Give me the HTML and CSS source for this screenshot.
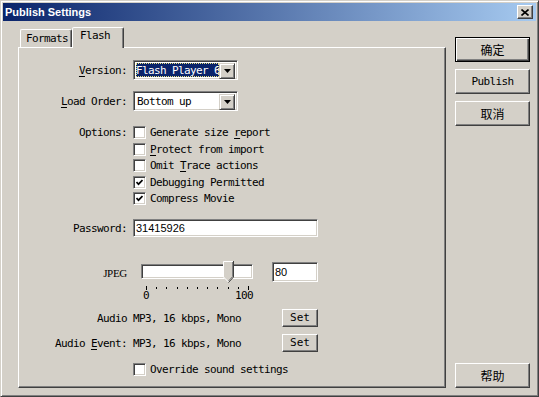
FILE: index.html
```html
<!DOCTYPE html>
<html lang="en">
<head>
<meta charset="UTF-8">
<meta name="viewport" content="width=device-width, initial-scale=1.0">
<title>Publish Settings</title>
<link rel="stylesheet" href="styles.css">
</head>
<body>

<div class="window">
  <div class="titlebar">
    <span class="title">Publish Settings</span>
    <button class="close">
      <svg width="8" height="7" viewBox="0 0 8 7"><path d="M0.5 0.5 L7.5 6.5 M7.5 0.5 L0.5 6.5" stroke="#000" stroke-width="1.6"/></svg>
    </button>
  </div>

  <div class="main">
    <div class="tabarea">
      <div class="tabs">
        <div class="tab">Formats</div>
        <div class="tab active">Flash</div>
      </div>

      <div class="panel">
        <div class="row r-version">
          <span class="lbl"><u>V</u>ersion:</span>
          <div class="select">
            <span class="sel-text focused">Flash Player 6</span>
            <span class="drop"><svg width="7" height="4" viewBox="0 0 7 4"><path d="M0 0 H7 L3.5 4 Z" fill="#000"/></svg></span>
          </div>
        </div>

        <div class="row r-load">
          <span class="lbl"><u>L</u>oad Order:</span>
          <div class="select">
            <span class="sel-text">Bottom up</span>
            <span class="drop"><svg width="7" height="4" viewBox="0 0 7 4"><path d="M0 0 H7 L3.5 4 Z" fill="#000"/></svg></span>
          </div>
        </div>

        <div class="row r-options">
          <span class="lbl opt-lbl">Options:</span>
          <div class="checks">
            <div class="check"><span class="box"></span><span>Generate size <u>r</u>eport</span></div>
            <div class="check"><span class="box"></span><span><u>P</u>rotect from import</span></div>
            <div class="check"><span class="box"></span><span>Omit <u>T</u>race actions</span></div>
            <div class="check"><span class="box"><svg width="7" height="7" viewBox="0 0 7 7"><path d="M0.5 3 L2.5 5.2 L6.5 1" fill="none" stroke="#000" stroke-width="1.7"/></svg></span><span>Debugging Permitted</span></div>
            <div class="check"><span class="box"><svg width="7" height="7" viewBox="0 0 7 7"><path d="M0.5 3 L2.5 5.2 L6.5 1" fill="none" stroke="#000" stroke-width="1.7"/></svg></span><span>Compress Movie</span></div>
          </div>
        </div>

        <div class="row r-password">
          <span class="lbl">Password:</span>
          <div class="field">31415926</div>
        </div>

        <div class="row r-jpeg">
          <span class="lbl jpeg-lbl">JPEG</span>
          <div class="jpeg-ctl">
            <div class="slider">
              <div class="track"></div>
              <svg class="thumb" width="11" height="22" viewBox="0 0 11 22">
                <path d="M0 0 H11 V16 L5.5 21.5 L0 16 Z" fill="#d4d0c8"/>
                <path d="M0.5 16 V0.5 H10" fill="none" stroke="#fff"/>
                <path d="M10.5 0 V16 L5.5 21.5" fill="none" stroke="#404040"/>
                <path d="M9.5 1 V15.5 L5.5 20" fill="none" stroke="#808080"/>
                <path d="M0.5 16 L5.5 21" fill="none" stroke="#fff"/>
              </svg>
              <div class="ticks">
                <i class="tick big"></i><i class="tick"></i><i class="tick"></i><i class="tick"></i><i class="tick"></i><i class="tick"></i><i class="tick"></i><i class="tick"></i><i class="tick"></i><i class="tick"></i><i class="tick big"></i>
              </div>
              <div class="scale"><span>0</span><span>100</span></div>
            </div>
            <div class="field quality">80</div>
          </div>
        </div>

        <div class="row r-audio">
          <span class="lbl">Audio</span>
          <div class="audio-ctl">
            <span>MP3, 16 kbps, Mono</span>
            <button class="btn set">Set</button>
          </div>
        </div>

        <div class="row r-event">
          <span class="lbl">Audio <u>E</u>vent:</span>
          <div class="audio-ctl">
            <span>MP3, 16 kbps, Mono</span>
            <button class="btn set">Set</button>
          </div>
        </div>

        <div class="row r-override">
          <span></span>
          <div class="check"><span class="box"></span><span>Override sound settings</span></div>
        </div>
      </div>
    </div>

    <div class="side">
      <button class="btn big default">确定</button>
      <button class="btn big">Publish</button>
      <button class="btn big">取消</button>
      <button class="btn big help">帮助</button>
    </div>
  </div>
</div>

</body>
</html>
```

FILE: styles.css
```css
body {
  margin: 0;
  background-color: #d4d0c8;
  font-family: "DejaVu Sans Mono", monospace;
  font-size: 11px;
  letter-spacing: -0.62px;
  color: #000;
}
u {
  text-decoration-thickness: 1px;
  text-underline-offset: 2px;
}
.window {
  width: 539px;
  height: 397px;
  box-sizing: border-box;
  border: 1px solid;
  border-color: #d4d0c8 #404040 #404040 #d4d0c8;
  box-shadow: inset 1px 1px #fff, inset -1px -1px #808080;
  padding: 2px;
  display: flex;
  flex-direction: column;
  background: #d4d0c8;
}
.titlebar {
  height: 18px;
  flex: none;
  background: linear-gradient(to right, #0a246a, #a6caf0);
  display: flex;
  align-items: center;
  justify-content: space-between;
  padding: 0 3px 0 2px;
}
.title {
  font: bold 11px "Liberation Sans", Arial, sans-serif;
  letter-spacing: 0;
  color: #fff;
}
button {
  font: inherit;
  color: #000;
  background: #d4d0c8;
  padding: 0;
  margin: 0;
}
.close, .btn {
  box-sizing: border-box;
  border: 1px solid;
  border-color: #fff #404040 #404040 #fff;
  box-shadow: inset -1px -1px #808080;
}
.close {
  width: 16px;
  height: 14px;
  display: flex;
  align-items: center;
  justify-content: center;
}
.main {
  flex: 1;
  display: flex;
}
.tabarea {
  margin-left: 15px;
  padding: 6px 0;
  display: flex;
  flex-direction: column;
}
.tabs {
  display: flex;
  height: 20px;
  align-items: flex-end;
  padding-left: 2px;
}
.tab {
  box-sizing: border-box;
  width: 52px;
  height: 18px;
  border: 1px solid;
  border-bottom: none;
  border-color: #fff #404040 transparent #fff;
  box-shadow: inset -1px 0 #808080;
  border-radius: 2px 2px 0 0;
  line-height: 17px;
  padding-left: 5px;
}
.tab.active {
  height: 21px;
  margin-bottom: -1px;
  background: #d4d0c8;
  position: relative;
  z-index: 1;
  line-height: 15px;
  padding-left: 7px;
}
.panel {
  width: 428px;
  height: 341px;
  box-sizing: border-box;
  border: 1px solid;
  border-color: #fff #404040 #404040 #fff;
  box-shadow: inset -1px -1px #808080;
  padding-top: 12px;
}
.row {
  display: grid;
  grid-template-columns: 108px 185px;
  column-gap: 6px;
  align-items: center;
}
.lbl {
  text-align: right;
  white-space: nowrap;
}
.select, .field, .box, .track {
  box-sizing: border-box;
  border: 1px solid;
  border-color: #808080 #fff #fff #808080;
  box-shadow: inset 1px 1px #404040, inset -1px -1px #d4d0c8;
  background: #fff;
}
.select {
  width: 105px;
  height: 20px;
  padding: 2px;
  display: flex;
}
.sel-text {
  flex: 1;
  line-height: 16px;
  padding-left: 1px;
  white-space: nowrap;
  overflow: hidden;
}
.sel-text.focused {
  background: #0a246a;
  color: #fff;
  outline: 1px dotted #e8e080;
  outline-offset: -1px;
  padding-left: 0;
}
.drop {
  width: 16px;
  height: 16px;
  flex: none;
  box-sizing: border-box;
  border: 1px solid;
  border-color: #d4d0c8 #404040 #404040 #d4d0c8;
  box-shadow: inset 1px 1px #fff, inset -1px -1px #808080;
  background: #d4d0c8;
  display: flex;
  align-items: center;
  justify-content: center;
}
.r-load {
  margin-top: 11px;
}
.r-options {
  margin-top: 13px;
  align-items: start;
}
.opt-lbl {
  line-height: 17px;
}
.checks {
  display: flex;
  flex-direction: column;
}
.check {
  height: 17px;
  display: flex;
  align-items: center;
  white-space: nowrap;
}
.checks .check:nth-child(even) {
  height: 16px;
}
.box {
  width: 13px;
  height: 13px;
  margin-right: 4px;
  display: flex;
  align-items: center;
  justify-content: center;
  flex: none;
}
.r-password {
  margin-top: 12px;
}
.field {
  height: 18px;
  padding-left: 2px;
  font-family: "Liberation Sans", Arial, sans-serif;
  letter-spacing: 0;
  line-height: 16px;
}
.r-jpeg {
  margin-top: 24px;
  align-items: start;
}
.jpeg-lbl {
  font-family: "Liberation Serif", serif;
  font-size: 11px;
  letter-spacing: -0.3px;
  line-height: 14px;
  margin-top: 5px;
}
.jpeg-ctl {
  display: flex;
  align-items: flex-start;
}
.slider {
  margin-left: 8px;
  width: 112px;
  position: relative;
}
.track {
  margin-top: 3px;
  height: 15px;
}
.thumb {
  position: absolute;
  left: 82px;
  top: 0;
}
.ticks {
  display: flex;
  justify-content: space-between;
  align-items: center;
  height: 4px;
  margin: 7px 4px 0 5px;
}
.tick {
  width: 1px;
  height: 2px;
  background: #000;
}
.tick.big {
  height: 4px;
}
.scale {
  display: flex;
  justify-content: space-between;
  padding: 0 0 0 2px;
  line-height: 10px;
  margin-top: 1px;
}
.quality {
  width: 46px;
  height: 20px;
  margin: 1px 0 0 19px;
  line-height: 18px;
}
.r-audio {
  margin-top: 8px;
}
.r-event {
  margin-top: 7px;
}
.audio-ctl {
  display: flex;
  align-items: center;
  justify-content: space-between;
}
.set {
  width: 36px;
  height: 18px;
  line-height: 14px;
}
.r-override {
  margin-top: 9px;
}
.side {
  margin-left: 9px;
  padding: 16px 0 6px;
  display: flex;
  flex-direction: column;
  gap: 7px;
}
.btn.big {
  width: 75px;
  height: 25px;
  font-family: "DejaVu Sans Mono", "Noto Sans CJK SC", monospace;
  font-size: 12px;
  letter-spacing: 0;
}
.btn.big:nth-child(2) {
  font-size: 11px;
  letter-spacing: -0.62px;
}
.btn.default {
  border: 1px solid #000;
  box-shadow: inset 1px 1px #fff, inset -1px -1px #404040, inset -2px -2px #808080;
}
.help {
  margin-top: auto;
}
```
